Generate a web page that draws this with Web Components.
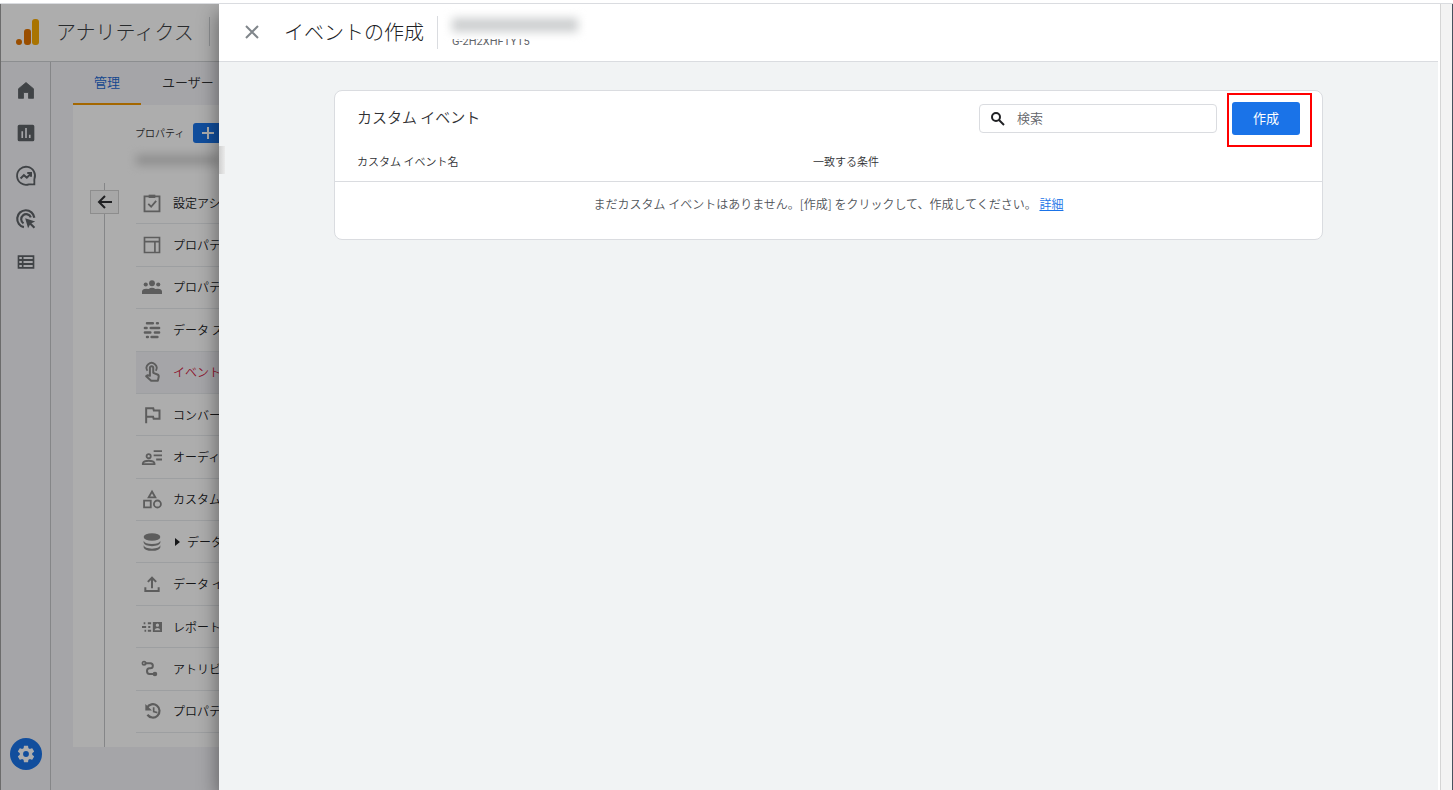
<!DOCTYPE html>
<html lang="ja">
<head>
<meta charset="utf-8">
<meta name="viewport" content="width=device-width, initial-scale=1">
<title>イベントの作成</title>
<style>
  body {
    margin: 0;
    font-family: "Noto Sans CJK JP", sans-serif;
    font-weight: 350;
    color: #303134;
    background: #fff;
  }
</style>
</head>
<body>
<analytics-app>
  <app-bar slot="bar" name="アナリティクス"></app-bar>
  <side-rail slot="rail"></side-rail>
  <admin-page slot="page"></admin-page>
  <event-drawer slot="drawer" heading="イベントの作成" stream="G-2H2XHFTYT5">
    <event-card></event-card>
  </event-drawer>
</analytics-app>

<script>
  // 24x24 icons, shared by the rail and the menu
  const ICONS = {
    home: '<path d="M3 10.500 12 3l9 7.500V22h-6v-7H9v7H3z" stroke="currentColor" stroke-width="1" stroke-linejoin="round"/>',
    reports: '<path d="M4 2h16a2 2 0 0 1 2 2v16a2 2 0 0 1-2 2H4a2 2 0 0 1-2-2V4a2 2 0 0 1 2-2zm2.500 8v8h2v-8zm4.500-4v12h2V6zm4.500 8v4h2v-4z" fill-rule="evenodd"/>',
    explore: '<path d="M22 22h-6.500A10.800 10.800 0 1 1 22 16z" fill="none" stroke="currentColor" stroke-width="2.200"/><path d="m5.500 15 4-4 3.500 3 5-5M13.500 8.500H18V13" fill="none" stroke="currentColor" stroke-width="2.400"/><circle cx="19.500" cy="19.500" r="1.200" fill="#fff"/>',
    ads: '<path d="M9.500 21.800A10.300 10.300 0 1 1 22 10.500M9 17.300A6 6 0 1 1 17.800 10" fill="none" stroke="currentColor" stroke-width="2.600"/><path d="m11 11 12 4-4.500 2.200 4.500 4.500-1.800 1.800-4.500-4.500L14.500 23z"/>',
    library: '<path d="M2 4h20v16H2zm2 2v2.500h3V6zm5 0v2.500h11V6zm-5 4.700v2.600h3v-2.600zm5 0v2.600h11v-2.600zm-5 4.800V18h3v-2.500zm5 0V18h11v-2.500z" fill-rule="evenodd"/>',
    gear: '<path d="M19.430 12.980c.040-.320.070-.640.070-.980s-.030-.660-.070-.980l2.110-1.650c.190-.150.240-.420.120-.640l-2-3.460c-.120-.220-.390-.300-.610-.220l-2.490 1c-.520-.400-1.080-.730-1.690-.980l-.380-2.650C14.460 2.180 14.250 2 14 2h-4c-.250 0-.460.180-.490.420l-.380 2.650c-.610.250-1.170.590-1.690.980l-2.490-1c-.230-.090-.490 0-.610.220l-2 3.460c-.130.220-.070.490.120.640l2.110 1.650c-.040.320-.070.650-.070.980s.030.660.070.980l-2.110 1.650c-.190.150-.240.420-.120.640l2 3.460c.120.220.390.300.610.220l2.490-1c.520.400 1.080.730 1.690.980l.380 2.650c.030.240.240.420.490.420h4c.250 0 .460-.180.490-.420l.380-2.650c.610-.250 1.170-.590 1.690-.980l2.490 1c.230.090.490 0 .610-.220l2-3.460c.120-.220.070-.490-.120-.640zM12 15.500a3.500 3.500 0 1 1 0-7 3.500 3.500 0 0 1 0 7z"/>',
    check: '<path d="M3 4h18v18H3zM7.500 13l3.500 3.500 6-7" fill="none" stroke="currentColor" stroke-width="2.200"/><path d="M8 2h8v4H8z"/>',
    layout: '<path d="M3 3h18v18H3zM3 8h18M15.500 8v13" fill="none" stroke="currentColor" stroke-width="2"/>',
    groups: '<circle cx="12" cy="7.500" r="3.500"/><circle cx="4.500" cy="9" r="2.500"/><circle cx="19.500" cy="9" r="2.500"/><path d="M0 20.500v-3q0-3.500 5-3.500 2 0 3 .500Q9.500 13 12 13t4 1.500q1-.500 3-.500 5 0 5 3.500v3z"/>',
    streams: '<path d="M6 4h7M18 4h1M3.500 9.500h2M10.500 9.500h10M3.500 15h6.500M15.500 15h5M6 20.500h1M11.500 20.500h7" fill="none" stroke="currentColor" stroke-width="3" stroke-linecap="round"/>',
    touch: '<path d="M6.500 10.500a6 6 0 1 1 10 0" fill="none" stroke="currentColor" stroke-width="2.200"/><path d="M9.500 16.500V7a2 2 0 0 1 4 0v6l5 2q2 .800 1.500 3l-1 4.500h-8L5 17l1.500-1z" fill="none" stroke="currentColor" stroke-width="2.400" stroke-linejoin="round"/>',
    flag: '<path d="M5 22V4h8.500l.700 2.500H21v10h-7l-.700-2.500H5" fill="none" stroke="currentColor" stroke-width="2.400"/>',
    audience: '<path d="M14 5h10M14 10h10M17 15h7" fill="none" stroke="currentColor" stroke-width="2.200"/><circle cx="8" cy="11" r="2.500" fill="none" stroke="currentColor" stroke-width="2.200"/><path d="M1 20.500v-1q1-3 7-3t7 3v1z" fill="none" stroke="currentColor" stroke-width="2.200"/>',
    shapes: '<path d="m12 3 4 7H8zM2.500 14h8v8h-8z" fill="none" stroke="currentColor" stroke-width="2.200"/><circle cx="18.500" cy="18" r="4.200" fill="none" stroke="currentColor" stroke-width="2.200"/>',
    database: '<ellipse cx="12" cy="6" rx="10" ry="4.500"/><path d="M2 10.500q1.500 4 10 4t10-4v2.500q-1.500 4-10 4T2 13zM2 16q1.500 4 10 4t10-4v2.500q-1.500 4-10 4T2 18.500z"/>',
    upload: '<path d="M12 17V5M7 9.500l5-5 5 5M4 16v4.500h16V16" fill="none" stroke="currentColor" stroke-width="2.400"/>',
    identity: '<path d="M2 7.500h2M7 7.500h4M0 12h5M7.500 12H10M3 16.500h2M7 16.500h4" fill="none" stroke="currentColor" stroke-width="2.400"/><path d="M13 6h11v12H13zm5.500 1.800a2 2 0 1 0 0 4 2 2 0 0 0 0-4zM15 15.800h7q-1-2.600-3.500-2.600T15 15.800z" fill-rule="evenodd"/>',
    path: '<path d="M3 5h7q3 0 3 3t-3 3H9q-3 0-3 3.500T9 18h6" fill="none" stroke="currentColor" stroke-width="2.400"/><circle cx="2.500" cy="5" r="2" fill="none" stroke="currentColor" stroke-width="2"/><circle cx="15.500" cy="18" r="2.800"/>',
    history: '<path d="M6 8a8 8 0 1 1 .500 8.500" fill="none" stroke="currentColor" stroke-width="2.600"/><path d="M4 3.500v8h8zM13 7.500h2V12l3.500 1v2L13 13.500z"/>'
  };

  class UiIcon extends HTMLElement {
    constructor() {
      super();
      this.attachShadow({ mode: 'open' });
    }

    connectedCallback() {
      this.shadowRoot.innerHTML = `
        <style>
          :host { display: block; width: 20px; height: 20px; flex: none; }
          svg { display: block; width: 100%; height: 100%; fill: currentColor; overflow: visible; }
        </style>
        <svg viewBox="0 0 24 24" aria-hidden="true">${ICONS[this.getAttribute('name')]}</svg>
      `;
    }
  }

  class AnalyticsApp extends HTMLElement {
    constructor() {
      super();
      this.attachShadow({ mode: 'open' });
      this.shadowRoot.innerHTML = `
        <style>
          :host {
            display: flex;
            flex-direction: column;
            box-sizing: border-box;
            min-height: 100vh;
            padding-top: 3px;
          }
          .window {
            flex: 1;
            display: flex;
            position: relative;
            border-top: 1px solid #dadce0;
          }
          .shell {
            flex: 1;
            display: flex;
            flex-direction: column;
            position: relative;
            border-left: 1px solid #a0a0a0;
            background: #f3f4f8;
          }
          .body { flex: 1; display: flex; }
          ::slotted([slot="page"]) { flex: 1; }
          .scrim {
            position: absolute;
            inset: 0 0 0 -1px;
            background: rgba(0, 0, 0, .32);
          }
          .track {
            width: 11px;
            border-left: 1px solid #d5d5d5;
            border-right: 1px solid #46525e;
            background: #f3f3f3;
          }
          /* the drawer slides over the shell and leaves a strip of it */
          ::slotted([slot="drawer"]) {
            position: absolute;
            inset: 0 13px 0 219px;
          }
        </style>
        <div class="window">
          <div class="shell">
            <slot name="bar"></slot>
            <div class="body">
              <slot name="rail"></slot>
              <slot name="page"></slot>
            </div>
            <div class="scrim"></div>
          </div>
          <div class="track"></div>
          <slot name="drawer"></slot>
        </div>
      `;
    }
  }

  class AppBar extends HTMLElement {
    constructor() {
      super();
      this.attachShadow({ mode: 'open' });
    }

    connectedCallback() {
      this.shadowRoot.innerHTML = `
        <style>
          :host {
            display: flex;
            align-items: center;
            height: 55px;
            padding: 0 0 2px 14px;
            border-bottom: 1px solid #cfd1d5;
            background: #fff;
          }
          svg { width: 24px; height: 28px; margin-right: 17px; }
          .name { font-size: 20px; font-weight: 300; line-height: 28px; color: #3c4043; }
          .rule { width: 1px; height: 29px; margin-left: 15px; background: #cfd1d5; }
        </style>
        <svg viewBox="0 0 24 28" aria-hidden="true">
          <rect x="17" y="1" width="7" height="26" rx="3" fill="#f9ab00"/>
          <rect x="9" y="11" width="7" height="16" rx="3" fill="#e37400"/>
          <circle cx="4" cy="24" r="3" fill="#e37400"/>
        </svg>
        <span class="name">${this.getAttribute('name')}</span>
        <span class="rule"></span>
      `;
    }
  }

  class SideRail extends HTMLElement {
    constructor() {
      super();
      this.attachShadow({ mode: 'open' });
      const items = [
        ['home', 'ホーム'],
        ['reports', 'レポート'],
        ['explore', '探索'],
        ['ads', '広告'],
        ['library', 'ライブラリ']
      ];
      this.shadowRoot.innerHTML = `
        <style>
          :host {
            display: flex;
            flex-direction: column;
            align-items: center;
            box-sizing: border-box;
            width: 50px;
            padding: 18px 0 20px;
            border-right: 1px solid #c4c6c9;
            color: #5f6368;
          }
          nav { flex: 1; display: flex; flex-direction: column; gap: 23px; }
          a { display: block; color: inherit; }
          button {
            display: grid;
            place-items: center;
            width: 32px;
            height: 32px;
            padding: 0;
            border: 0;
            border-radius: 50%;
            background: #1a73e8;
            color: #fff;
          }
        </style>
        <nav>
          ${items.map(([icon, label]) => `<a href="#${icon}" aria-label="${label}"><ui-icon name="${icon}"></ui-icon></a>`).join('')}
        </nav>
        <button aria-label="管理"><ui-icon name="gear"></ui-icon></button>
      `;
    }
  }

  class MenuItem extends HTMLElement {
    constructor() {
      super();
      this.attachShadow({ mode: 'open' });
    }

    connectedCallback() {
      const arrow = this.hasAttribute('expandable') ? '<span class="arrow"></span>' : '';
      this.shadowRoot.innerHTML = `
        <style>
          :host { display: block; border-bottom: 1px solid #e8eaed; }
          :host([active]) { background: #f3f4f8; --text: #d01840; }
          a {
            display: flex;
            align-items: center;
            height: 100%;
            padding-left: 6px;
            font-size: 12px;
            line-height: 18px;
            white-space: nowrap;
            text-decoration: none;
            color: var(--text, #202124);
          }
          ui-icon { margin-right: 11px; color: #8a8a8a; }
          .arrow {
            margin: 0 7px 0 2px;
            border: 4px solid transparent;
            border-left: 5px solid #202124;
            border-right: 0;
          }
        </style>
        <a href="#${this.getAttribute('icon')}">
          <ui-icon name="${this.getAttribute('icon')}"></ui-icon>${arrow}<slot></slot>
        </a>
      `;
    }
  }

  class AdminPage extends HTMLElement {
    constructor() {
      super();
      this.attachShadow({ mode: 'open' });
      this.shadowRoot.innerHTML = `
        <style>
          :host {
            display: flex;
            flex-direction: column;
            padding: 0 0 43px 22px;
          }
          .tabs { display: flex; height: 43px; font-size: 13px; line-height: 40px; }
          .tabs a {
            box-sizing: border-box;
            padding: 0 21px;
            color: #303134;
            text-decoration: none;
          }
          .tabs a.on { color: #1967d2; border-bottom: 2px solid #f29900; }
          .panel { flex: 1; display: flex; background: #fff; }
          .back { width: 63px; display: flex; flex-direction: column; align-items: center; }
          .back::before { content: ""; width: 1px; height: 7px; margin-top: 78px; background: #c4c6c9; }
          .back::after { content: ""; flex: 1; width: 1px; background: #c4c6c9; }
          .back button {
            display: grid;
            place-items: center;
            width: 29px;
            height: 24px;
            padding: 0;
            border: 1px solid #d0d0d0;
            background: #f6f6f6;
          }
          .back svg { width: 16px; height: 16px; fill: none; stroke: #303134; stroke-width: 2; }
          .property { flex: 1; display: flex; flex-direction: column; padding-bottom: 14px; }
          .head { display: flex; align-items: center; gap: 9px; margin-left: -1px; padding-top: 18px; font-size: 10px; line-height: 20px; }
          .head button {
            width: 100px;
            height: 20px;
            padding: 0 0 0 8px;
            border: 0;
            border-radius: 3px;
            background: #1a73e8;
            text-align: left;
          }
          .head svg { display: block; width: 14px; height: 14px; stroke: #fff; stroke-width: 2; }
          .account {
            width: 84px;
            height: 10px;
            margin: 12px 0 17px;
            background: #d0d0d0;
            filter: blur(5px);
          }
          .menu { flex: 1; display: grid; grid-auto-rows: 1fr; }
        </style>
        <div class="tabs">
          <a class="on" href="#admin">管理</a>
          <a href="#user">ユーザー</a>
        </div>
        <div class="panel">
          <div class="back">
            <button aria-label="戻る"><svg viewBox="0 0 16 16"><path d="M15 8H2M8 2 2 8l6 6"/></svg></button>
          </div>
          <div class="property">
            <div class="head">
              <span>プロパティ</span>
              <button aria-label="プロパティを作成"><svg viewBox="0 0 14 14"><path d="M7 1v12M1 7h12"/></svg></button>
            </div>
            <div class="account"></div>
            <nav class="menu">
              <menu-item icon="check">設定アシ</menu-item>
              <menu-item icon="layout">プロパテ</menu-item>
              <menu-item icon="groups">プロパテ</menu-item>
              <menu-item icon="streams">データ ス</menu-item>
              <menu-item icon="touch" active>イベント</menu-item>
              <menu-item icon="flag">コンバー</menu-item>
              <menu-item icon="audience">オーディ</menu-item>
              <menu-item icon="shapes">カスタム</menu-item>
              <menu-item icon="database" expandable>データ</menu-item>
              <menu-item icon="upload">データ イ</menu-item>
              <menu-item icon="identity">レポート</menu-item>
              <menu-item icon="path">アトリビ</menu-item>
              <menu-item icon="history">プロパテ</menu-item>
            </nav>
          </div>
        </div>
      `;
    }
  }

  class EventDrawer extends HTMLElement {
    constructor() {
      super();
      this.attachShadow({ mode: 'open' });
    }

    connectedCallback() {
      this.shadowRoot.innerHTML = `
        <style>
          :host {
            display: flex;
            flex-direction: column;
            border-right: 2px solid #fff;
            background: #f1f3f4;
            box-shadow: -2px 8px 18px rgba(0, 0, 0, .4);
            clip-path: inset(0 0 0 -30px);
          }
          header {
            display: flex;
            align-items: center;
            height: 55px;
            padding: 0 0 2px 26px;
            border-bottom: 1px solid #dadce0;
            background: #fff;
          }
          .close { width: 14px; height: 14px; padding: 0; border: 0; background: none; }
          .close svg { display: block; stroke: #80868b; stroke-width: 2; }
          h1 {
            margin: 0 13px 0 25px;
            font-size: 20px;
            font-weight: 300;
            line-height: 28px;
            color: #202124;
          }
          .stream {
            align-self: stretch;
            display: flex;
            flex-direction: column;
            justify-content: center;
            margin: 12px 0 10px;
            padding-left: 14px;
            border-left: 1px solid #dadce0;
            font: 11px/14px Roboto, sans-serif;
            color: #5f6368;
          }
          .site {
            position: relative;
            width: 128px;
            height: 18px;
          }
          /* masks the site address and the top of the line under it */
          .site::before {
            content: "";
            position: absolute;
            inset: 0 0 -4px -3px;
            background: #fff;
          }
          .site::after {
            content: "";
            position: absolute;
            inset: 1px 2px 3px 0;
            background: #cdcfd0;
            filter: blur(5px);
          }
          .smudge {
            position: absolute;
            top: 142px;
            left: 0;
            width: 6px;
            height: 28px;
            background: linear-gradient(90deg, #cfcfcf, #ebebeb);
          }
        </style>
        <header>
          <button class="close" aria-label="閉じる"><svg width="14" height="14" viewBox="0 0 14 14"><path d="m1 1 12 12M13 1 1 13"/></svg></button>
          <h1>${this.getAttribute('heading')}</h1>
          <div class="stream">
            <div class="site"></div>
            <span>${this.getAttribute('stream')}</span>
          </div>
        </header>
        <slot></slot>
        <div class="smudge"></div>
      `;
    }
  }

  class EventCard extends HTMLElement {
    constructor() {
      super();
      this.attachShadow({ mode: 'open' });
      this.shadowRoot.innerHTML = `
        <style>
          :host {
            display: block;
            box-sizing: border-box;
            width: calc(100% - 64px);
            max-width: 989px;
            margin: 28px auto;
            border: 1px solid #dadce0;
            border-radius: 8px;
            background: #fff;
          }
          .head { display: flex; align-items: center; padding: 11px 22px 7px; }
          h2 { flex: 1; margin: 0; padding-bottom: 3px; font-size: 15px; font-weight: inherit; line-height: 24px; color: #303134; }
          .search {
            display: flex;
            align-items: center;
            box-sizing: border-box;
            width: 238px;
            height: 29px;
            margin-right: 15px;
            border: 1px solid #dadce0;
            border-radius: 4px;
          }
          .search svg { margin: 0 12px 0 10px; fill: none; stroke: #202124; stroke-width: 2; }
          input {
            flex: 1;
            min-width: 0;
            padding: 0 0 2px;
            border: 0;
            outline: 0;
            background: none;
            font: inherit;
            font-size: 13px;
            line-height: 20px;
          }
          input::placeholder { color: #5f6368; }
          .create { position: relative; }
          .create button {
            display: block;
            width: 68px;
            height: 33px;
            padding: 0 0 3px;
            border: 0;
            border-radius: 3px;
            background: #1a73e8;
            color: #fff;
            font: inherit;
            font-size: 13px;
            font-weight: 400;
          }
          .create::after {
            content: "";
            position: absolute;
            inset: -9px -12px -12px -5px;
            border: 2px solid #f00;
            pointer-events: none;
          }
          table { width: 100%; border-collapse: collapse; table-layout: fixed; }
          th {
            padding: 9px 0 10px 22px;
            border-bottom: 1px solid #dadce0;
            font-size: 11px;
            font-weight: inherit;
            line-height: 20px;
            text-align: left;
          }
          th:first-child { width: 434px; }
          td { padding: 12px 0 25px; font-size: 12px; line-height: 20px; text-align: center; color: #50545a; }
          td a { color: #1a73e8; }
        </style>
        <div class="head">
          <h2>カスタム イベント</h2>
          <label class="search">
            <svg width="15" height="15" viewBox="0 0 15 15" aria-hidden="true"><circle cx="6" cy="6" r="4"/><path d="m9 9 5 5"/></svg>
            <input type="search" placeholder="検索" aria-label="検索">
          </label>
          <div class="create"><button>作成</button></div>
        </div>
        <table>
          <thead>
            <tr><th>カスタム イベント名</th><th>一致する条件</th></tr>
          </thead>
          <tbody>
            <tr><td colspan="2">まだカスタム イベントはありません。[作成] をクリックして、作成してください。 <a href="#details">詳細</a></td></tr>
          </tbody>
        </table>
      `;
    }
  }

  customElements.define('ui-icon', UiIcon);
  customElements.define('analytics-app', AnalyticsApp);
  customElements.define('app-bar', AppBar);
  customElements.define('side-rail', SideRail);
  customElements.define('menu-item', MenuItem);
  customElements.define('admin-page', AdminPage);
  customElements.define('event-drawer', EventDrawer);
  customElements.define('event-card', EventCard);
</script>
</body>
</html>
